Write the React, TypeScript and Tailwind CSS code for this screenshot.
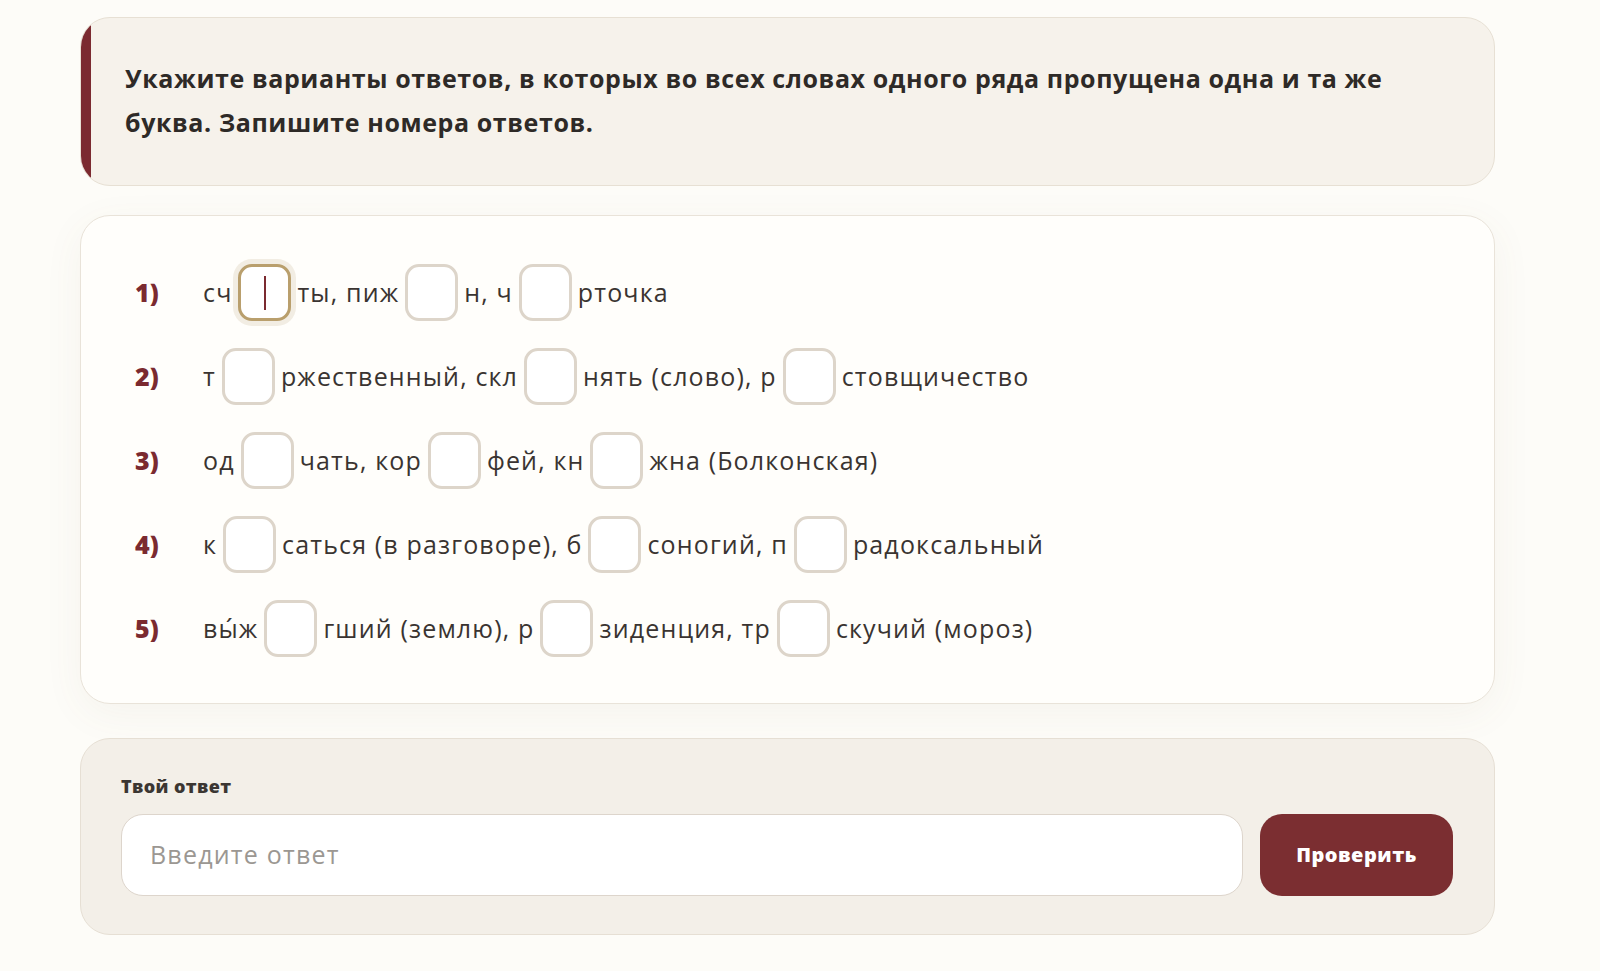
import React from 'react';

type Part = string | null;

const rows: { num: string; parts: Part[] }[] = [
  { num: '1)', parts: ['сч', null, 'ты, пиж', null, 'н, ч', null, 'рточка'] },
  { num: '2)', parts: ['т', null, 'ржественный, скл', null, 'нять (слово), р', null, 'стовщичество'] },
  { num: '3)', parts: ['од', null, 'чать, кор', null, 'фей, кн', null, 'жна (Болконская)'] },
  { num: '4)', parts: ['к', null, 'саться (в разговоре), б', null, 'соногий, п', null, 'радоксальный'] },
  { num: '5)', parts: ['вы́ж', null, 'гший (землю), р', null, 'зиденция, тр', null, 'скучий (мороз)'] },
];

function Gap({ focused }: { focused?: boolean }) {
  if (focused) {
    return (
      <div className="mx-[6px] flex h-[57px] w-[53px] shrink-0 items-center justify-center rounded-[14px] border-[3px] border-[#b99f6d] bg-white shadow-[0_0_0_5px_#f2ede3]">
        <span className="h-[34px] w-[2px] bg-[#7b2a30]" />
      </div>
    );
  }
  return <div className="mx-[6px] h-[57px] w-[53px] shrink-0 rounded-[14px] border-[3px] border-[#ddd5ca] bg-white" />;
}

function Row({ num, parts, first }: { num: string; parts: Part[]; first: boolean }) {
  let gapIndex = 0;
  return (
    <div className="flex h-[57px] items-center">
      <div className="w-[68px] shrink-0 text-[25px] font-extrabold text-[#7b2a30]">{num}</div>
      {parts.map((p, i) => {
        if (p === null) {
          const f = first && gapIndex === 0;
          gapIndex++;
          return <Gap key={i} focused={f} />;
        }
        return (
          <span key={i} className="whitespace-pre text-[25px] tracking-[1.15px] text-[#3a3431]">
            {p}
          </span>
        );
      })}
    </div>
  );
}

export default function App() {
  return (
    <div
      className="min-h-[971px] w-full bg-[#fdfcf8] pt-[17px]"
      style={{ fontFamily: '"Open Sans", "Noto Sans", sans-serif' }}
    >
      <div className="ml-[80px] w-[1415px]">
        {/* task text */}
        <div className="overflow-hidden rounded-[30px] border border-[#e7e0d4] bg-[#f6f2eb]">
          <div className="border-l-[10px] border-[#7b2a30] pb-[41px] pl-[34px] pr-[60px] pt-[38px]">
            <p className="text-[25px] font-bold leading-[44px] tracking-[0.6px] text-[#2e2a27]">
              Укажите варианты ответов, в которых во всех словах одного ряда пропущена одна и та же буква. Запишите номера ответов.
            </p>
          </div>
        </div>

        {/* rows */}
        <div className="mt-[29px] flex flex-col gap-[27px] rounded-[30px] border border-[#e9e3d9] bg-[#fffefb] pb-[46px] pl-[54px] pt-[48px] shadow-[0_10px_40px_rgba(120,100,70,0.06)]">
          {rows.map((r, i) => (
            <Row key={r.num} num={r.num} parts={r.parts} first={i === 0} />
          ))}
        </div>

        {/* answer */}
        <div className="mt-[34px] rounded-[30px] border border-[#e6dfd4] bg-[#f3efe8] pb-[38px] pl-[40px] pr-[41px] pt-[35px]">
          <div className="text-[18px] font-extrabold leading-[24px] tracking-[0.4px] text-[#3b3632]">Твой ответ</div>
          <div className="mt-[16px] flex items-center gap-[17px]">
            <div className="flex h-[82px] flex-1 items-center rounded-[22px] border border-[#ddd5cc] bg-white px-[28px]">
              <span className="text-[25px] tracking-[1.2px] text-[#9b9792]">Введите ответ</span>
            </div>
            <button className="h-[82px] w-[193px] rounded-[22px] bg-[#7b2e31] text-[20px] font-extrabold tracking-[0.5px] text-white">
              Проверить
            </button>
          </div>
        </div>
      </div>
    </div>
  );
}
